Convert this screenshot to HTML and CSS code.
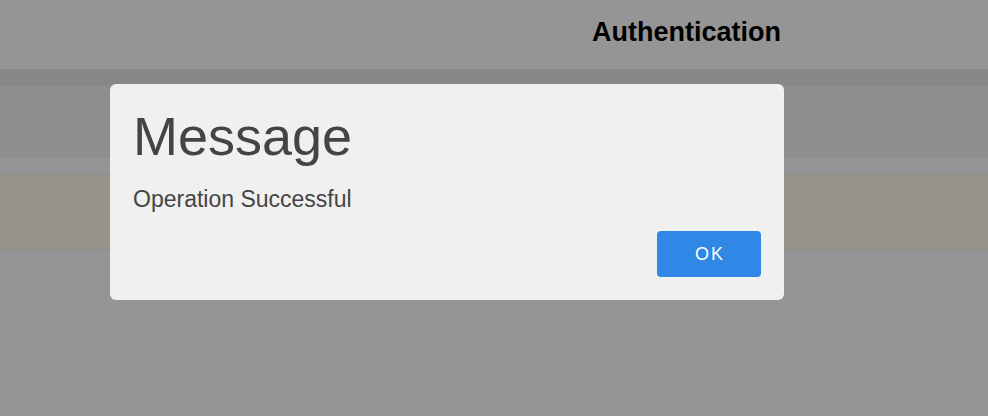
FILE: index.html
```html
<!DOCTYPE html>
<html lang="en">
<head>
<meta charset="utf-8">
<title>Authentication</title>
<link rel="stylesheet" href="styles.css">
</head>
<body>
<div class="page">
  <header class="topbar">
    <h1 class="title">Authentication</h1>
  </header>
  <div class="subbar"></div>
  <section class="panel"></section>
  <div class="spacer"></div>
  <div class="notice"></div>
</div>
<div class="overlay">
  <div class="dialog" role="dialog" aria-labelledby="dlg-title">
    <h2 class="dialog-title" id="dlg-title">Message</h2>
    <p class="dialog-text">Operation Successful</p>
    <div class="dialog-actions">
      <button class="btn-ok" type="button">OK</button>
    </div>
  </div>
</div>
</body>
</html>
```
FILE: styles.css
```css
* { box-sizing: border-box; }
html, body {
  margin: 0;
  padding: 0;
  height: 100%;
}
body {
  font-family: "Liberation Sans", Arial, sans-serif;
  background: #f8f8f8;
  position: relative;
  overflow: hidden;
}
.page {
  display: flex;
  flex-direction: column;
}
.topbar {
  height: 70px;
  border-bottom: 1px solid #e3e3e3;
  background: #f8f8f8;
  display: flex;
  justify-content: center;
  padding-left: 385px;
}
.title {
  margin: 0;
  font-size: 27px;
  font-weight: bold;
  color: #000;
  line-height: 64px;
}
.subbar {
  height: 16px;
  background: #e1e1e1;
}
.panel {
  height: 72px;
  background: #ededed;
}
.spacer {
  height: 16px;
  background: #f8f8f8;
}
.notice {
  height: 76px;
  background: #faf7e6;
  border-top: 1px solid #f0ece0;
  border-bottom: 1px solid #f0ece0;
}
.overlay {
  position: absolute;
  inset: 0;
  background: rgba(0, 0, 0, 0.4);
  padding: 84px 0 0 110px;
}
.dialog {
  width: 674px;
  height: 216px;
  background: #f0f0f0;
  border-radius: 6px;
  padding: 22px 23px 23px 23px;
  display: flex;
  flex-direction: column;
  color: #444;
}
.dialog-title {
  margin: 0;
  font-size: 54px;
  font-weight: normal;
  line-height: 60px;
}
.dialog-text {
  margin: 20px 0 0 0;
  font-size: 23px;
  line-height: 26px;
}
.dialog-actions {
  margin-top: auto;
  display: flex;
  justify-content: flex-end;
}
.btn-ok {
  width: 104px;
  height: 46px;
  border: none;
  border-radius: 4px;
  background: #2f88e6;
  color: #fff;
  font-family: "Liberation Sans", Arial, sans-serif;
  font-size: 18px;
  letter-spacing: 2px;
  padding: 0 0 0 2px;
}
```
